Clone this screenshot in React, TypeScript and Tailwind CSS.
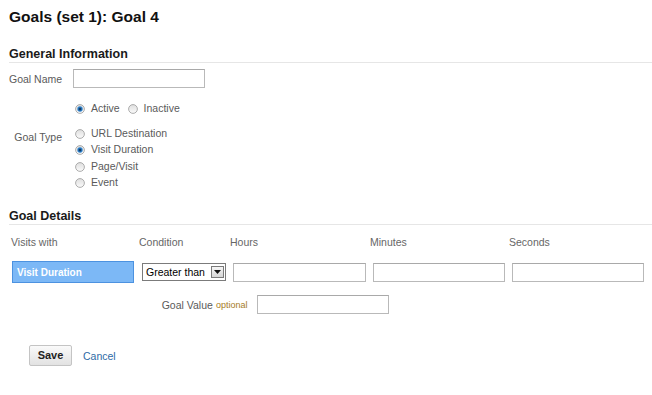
import React from "react";

function Radio({ checked }: { checked?: boolean }) {
  return (
    <svg width="10" height="10" viewBox="0 0 10 10" className="shrink-0 translate-y-[1px]">
      <defs>
        <linearGradient id={checked ? "rgc" : "rgu"} x1="0" y1="0" x2="0" y2="1">
          <stop offset="0" stopColor="#dedede" />
          <stop offset="1" stopColor="#fbfbfb" />
        </linearGradient>
      </defs>
      <circle cx="5" cy="5" r="4.4" fill={`url(#${checked ? "rgc" : "rgu"})`} stroke="#a4a4a4" strokeWidth="0.9" />
      {checked && (
        <>
          <circle cx="5" cy="5" r="2.7" fill="#2f84cf" />
          <circle cx="5" cy="5" r="1.5" fill="#123c66" />
        </>
      )}
    </svg>
  );
}

function Field({ w, h = 19 }: { w: number; h?: number }) {
  return (
    <div
      className="border border-[#b9b9b9] border-t-[#a9a9a9] bg-white shrink-0"
      style={{ width: w, height: h }}
    />
  );
}

export default function App() {
  const label = "text-[10.5px] text-[#5a5a5a]";
  return (
    <div className="w-[652px] h-[395px] bg-white pl-[9px] font-['Liberation_Sans',Arial,sans-serif] overflow-hidden">
      <h1 className="mt-[7px] text-[15.5px] leading-[20px] font-bold text-[#111]">Goals (set 1): Goal 4</h1>

      <div className="mt-[19px] text-[12.5px] leading-[16px] font-bold text-[#1a1a1a] border-b border-[#e6e6e6]">
        General Information
      </div>

      <div className="mt-[6px] flex items-center">
        <div className={`${label} w-[64px] leading-[14px]`}>Goal Name</div>
        <Field w={132} h={19} />
      </div>

      <div className="mt-[12px] ml-[66px] flex items-center h-[16px]">
        <Radio checked />
        <span className={`${label} ml-[6px] leading-[14px]`}>Active</span>
        <span className="ml-[8px]"><Radio /></span>
        <span className={`${label} ml-[6px] leading-[14px]`}>Inactive</span>
      </div>

      <div className="mt-[9px] flex">
        <div className={`${label} w-[53px] text-right leading-[14px] pt-[5px]`}>Goal Type</div>
        <div className="ml-[13px] flex flex-col">
          {[
            ["URL Destination", false],
            ["Visit Duration", true],
            ["Page/Visit", false],
            ["Event", false],
          ].map(([t, c]) => (
            <div key={t as string} className="flex items-center h-[16.3px]">
              <Radio checked={c as boolean} />
              <span className={`${label} ml-[6px] leading-[14px]`}>{t as string}</span>
            </div>
          ))}
        </div>
      </div>

      <div className="mt-[18px] text-[12.5px] leading-[16px] font-bold text-[#1a1a1a] border-b border-[#e6e6e6]">
        Goal Details
      </div>

      <div className={`mt-[10px] flex ${label} leading-[14px] text-[#666]`}>
        <div className="ml-[2px] w-[128px]">Visits with</div>
        <div className="w-[91px]">Condition</div>
        <div className="w-[140px]">Hours</div>
        <div className="w-[139px]">Minutes</div>
        <div>Seconds</div>
      </div>

      <div className="mt-[12px] flex items-center">
        <div className="ml-[3px] w-[122px] h-[22px] bg-[#7cb8f6] border border-[#4c92e0] flex items-center pl-[4px] text-[10px] font-bold text-white">
          Visit Duration
        </div>
        <div className="ml-[8px] w-[84px] h-[18px] border border-[#7b7b7b] bg-white flex items-center justify-between pl-[3px] pr-[1px]">
          <span className="text-[10.5px] leading-[14px] text-black whitespace-nowrap">Greater than</span>
          <div className="w-[13px] h-[12px] border border-[#7a7a7a] bg-gradient-to-b from-[#f6f6f6] to-[#d6d6d6] flex items-center justify-center shrink-0">
            <svg width="7" height="4" viewBox="0 0 7 4">
              <polygon points="0,0 7,0 3.5,4" fill="#111" />
            </svg>
          </div>
        </div>
        <div className="ml-[7px]"><Field w={133} /></div>
        <div className="ml-[7px]"><Field w={132} /></div>
        <div className="ml-[7px]"><Field w={132} /></div>
      </div>

      <div className="mt-[12px] flex items-center pl-[152.7px]">
        <span className={`${label} leading-[14px]`}>Goal Value</span>
        <span className="ml-[3px] text-[9px] leading-[12px] text-[#a67c1e]">optional</span>
        <div className="ml-[10px]"><Field w={132} /></div>
      </div>

      <div className="mt-[31px] ml-[20px] flex items-center">
        <button className="w-[43px] h-[21px] rounded-[2px] border border-[#c4c4c4] bg-gradient-to-b from-[#fafafa] to-[#e2e2e2] text-[11px] font-bold text-[#222] leading-none">
          Save
        </button>
        <span className="ml-[11px] text-[10.5px] leading-[14px] text-[#2d6aa6]">Cancel</span>
      </div>
    </div>
  );
}
